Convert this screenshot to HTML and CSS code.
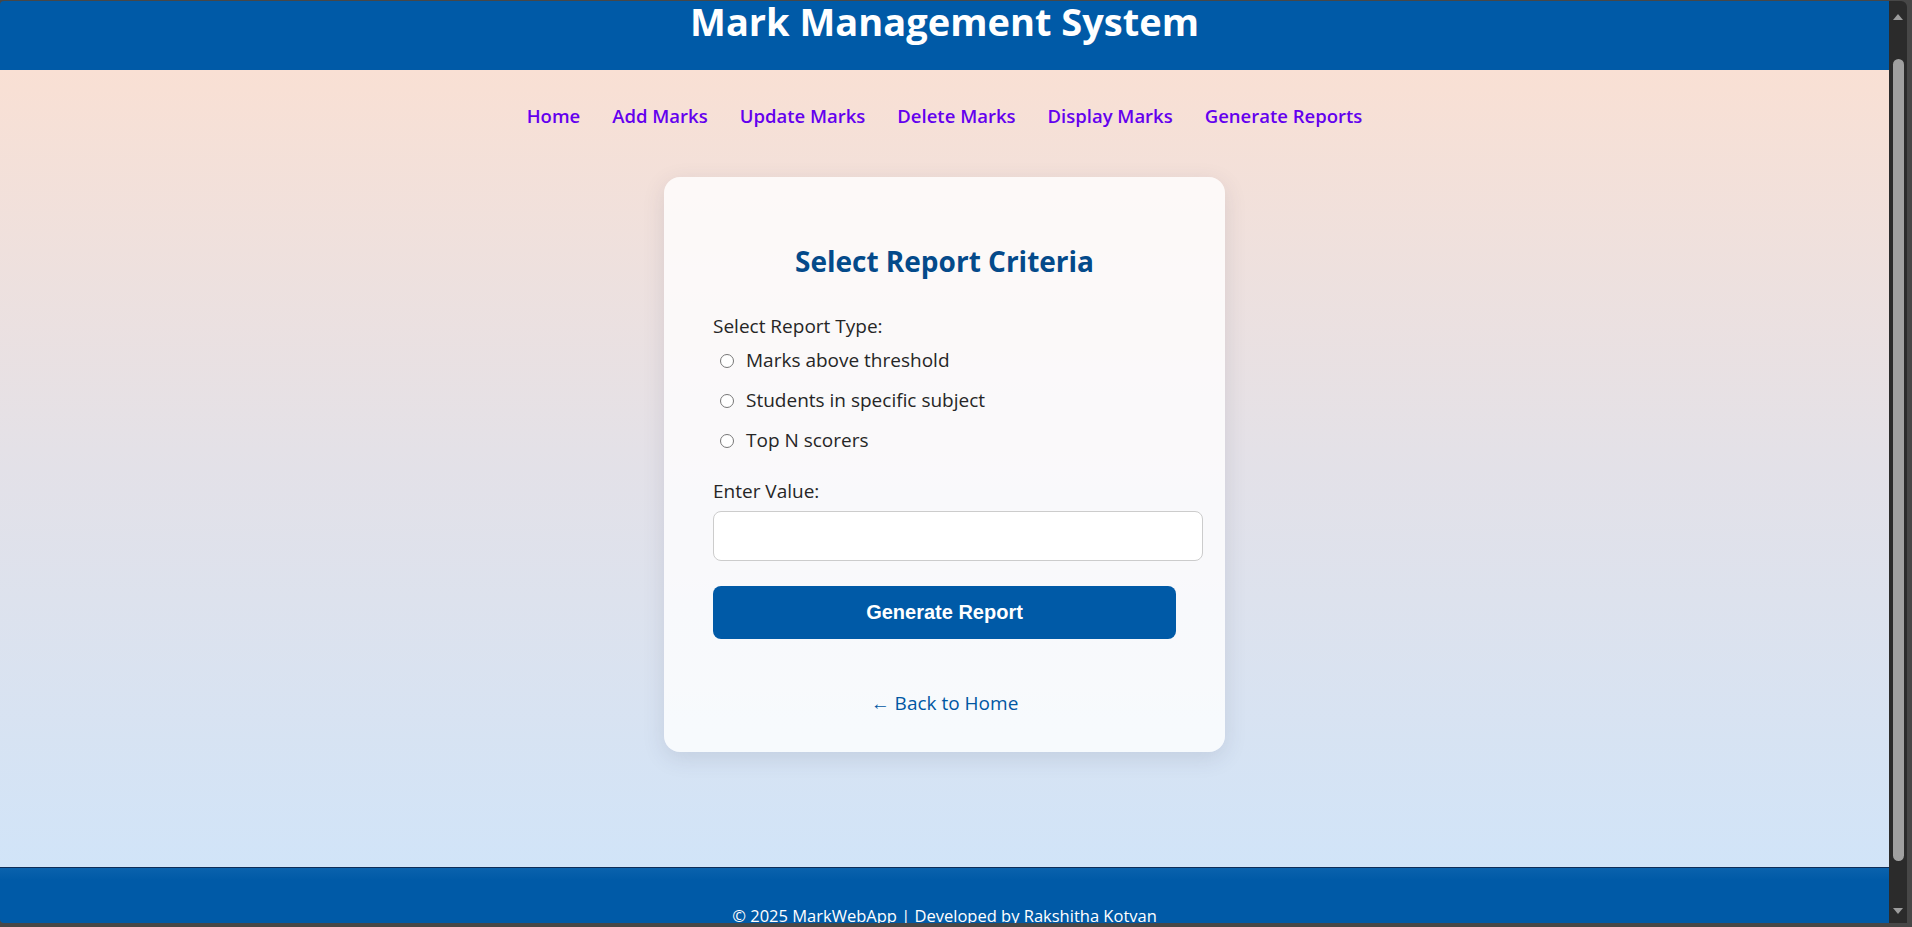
FILE: index.html
```html
<!DOCTYPE html>
<html lang="en">
<head>
<meta charset="utf-8">
<title>Generate Reports - Mark Management System</title>
<link rel="stylesheet" href="styles.css">
</head>
<body>
<div class="window">
  <div class="page">
    <header class="site-header">
      <h1 class="site-title">Mark Management System</h1>
    </header>
    <main class="main">
      <nav class="nav">
        <a class="nav-link" href="#">Home</a>
        <a class="nav-link" href="#">Add Marks</a>
        <a class="nav-link" href="#">Update Marks</a>
        <a class="nav-link" href="#">Delete Marks</a>
        <a class="nav-link" href="#">Display Marks</a>
        <a class="nav-link" href="#">Generate Reports</a>
      </nav>
      <section class="card">
        <h2 class="card-title">Select Report Criteria</h2>
        <form class="report-form">
          <span class="field-label">Select Report Type:</span>
          <div class="radio-group">
            <label class="radio-row"><input class="radio" type="radio" name="type" value="above">Marks above threshold</label>
            <label class="radio-row"><input class="radio" type="radio" name="type" value="subject">Students in specific subject</label>
            <label class="radio-row"><input class="radio" type="radio" name="type" value="top">Top N scorers</label>
          </div>
          <label class="field-label value-label" for="value">Enter Value:</label>
          <input class="text-input" id="value" type="text">
          <button class="submit-btn" type="button">Generate Report</button>
        </form>
        <div class="back-wrap"><a class="back-link" href="#">← Back to Home</a></div>
      </section>
    </main>
    <footer class="site-footer">
      <p class="footer-text">© 2025 MarkWebApp | Developed by Rakshitha Kotvan</p>
    </footer>
  </div>
  <div class="scrollbar">
    <span class="arrow arrow-up"></span>
    <span class="thumb"></span>
    <span class="arrow arrow-down"></span>
  </div>
</div>
</body>
</html>
```
FILE: styles.css
```css
* { box-sizing: border-box; }

html, body {
  margin: 0;
  padding: 0;
}

body {
  font-family: "Open Sans", "Noto Sans", sans-serif;
  background: #474747;
  overflow: hidden;
}

.window {
  display: flex;
  height: 927px;
  padding: 1px 5px 4px 0;
  background: #474747;
}

.page {
  flex: 1;
  display: flex;
  flex-direction: column;
  overflow: hidden;
  border-top-left-radius: 4px;
  border-bottom-left-radius: 4px;
}

.site-header {
  flex: 0 0 69px;
  background: #005aa7;
  text-align: center;
}

.site-title {
  margin: 0;
  color: #fff;
  font-size: 38px;
  font-weight: 700;
  line-height: 40px;
}

.main {
  flex: 0 0 797px;
  background: linear-gradient(to bottom, #f9e0d4 0%, #e3e1e8 50%, #d1e4f8 100%);
  display: flex;
  flex-direction: column;
  align-items: center;
}

.nav {
  margin-top: 33px;
  display: flex;
  gap: 32px;
  justify-content: center;
}

.nav-link {
  color: #6400ee;
  text-decoration: none;
  font-size: 18.5px;
  font-weight: 600;
  line-height: 26px;
}

.card {
  margin-top: 48px;
  padding: 66px 49px 35px 49px;
  border-radius: 16px;
  background: rgba(255, 255, 255, 0.8);
  box-shadow: 0 6px 22px rgba(60, 60, 90, 0.13);
}

.card-title {
  margin: 0 0 34px;
  width: 463px;
  text-align: center;
  color: #044a8a;
  font-size: 28px;
  font-weight: 700;
  line-height: 36px;
}

.report-form {
  width: 463px;
  display: flex;
  flex-direction: column;
  align-items: flex-start;
}

.field-label {
  display: block;
  color: #262626;
  font-size: 19px;
  font-weight: 500;
  line-height: 26px;
}

.radio-group {
  margin-top: 1px;
  margin-bottom: 18px;
  display: flex;
  flex-direction: column;
}

.radio-row {
  display: block;
  padding: 7px 0;
  color: #262626;
  font-size: 19px;
  font-weight: 500;
  line-height: 26px;
}

.radio {
  width: 14px;
  height: 14px;
  margin: 0 12px 0 7px;
  vertical-align: baseline;
  position: relative;
  top: 1px;
}

.value-label {
  margin-bottom: 7px;
}

.text-input {
  box-sizing: content-box;
  width: 100%;
  height: 48px;
  padding: 0 13px 0 12px;
  border: 1px solid #cccccc;
  border-radius: 8px;
  background: #fff;
  font-size: 16px;
}

.submit-btn {
  margin-top: 25px;
  width: 100%;
  height: 53px;
  border: none;
  border-radius: 8px;
  background: #005aa7;
  color: #fff;
  font-family: "Liberation Sans", Arial, sans-serif;
  font-size: 20px;
  font-weight: 700;
}

.back-wrap {
  margin-top: 51px;
  width: 463px;
  text-align: center;
  line-height: 26px;
}

.back-link {
  color: #0057a3;
  text-decoration: none;
  font-size: 19px;
  font-weight: 500;
}

.site-footer {
  flex: 0 0 auto;
  background: linear-gradient(to bottom, #0a62ad 0, #005aa7 12px);
  border-top: 1px solid #0c2d58;
  padding: 36px 0 20px;
  text-align: center;
}

.footer-text {
  margin: 0;
  color: #fff;
  font-size: 16.5px;
  line-height: 24px;
}

.scrollbar {
  flex: 0 0 18px;
  background: #2b2b2b;
  display: flex;
  flex-direction: column;
  align-items: center;
  padding: 12px 0 8px;
  border-top-right-radius: 6px;
}

.arrow {
  width: 0;
  height: 0;
  border-left: 5px solid transparent;
  border-right: 5px solid transparent;
}

.arrow-up {
  margin-top: 1px;
  border-bottom: 6px solid #9c9c9c;
}

.thumb {
  margin: 39px 0 0 1px;
  width: 11px;
  height: 802px;
  border-radius: 6px;
  background: #a0a0a0;
}

.arrow-down {
  margin-top: 47px;
  border-top: 6px solid #9c9c9c;
}
```
